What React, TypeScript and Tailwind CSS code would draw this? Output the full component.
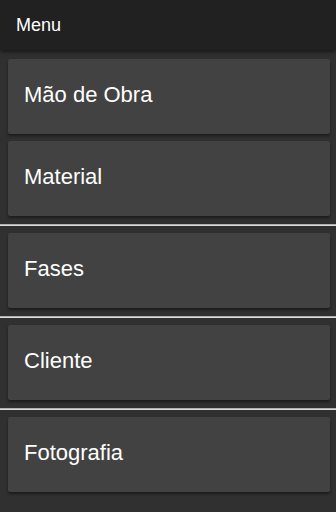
const items = ["Mão de Obra", "Material", "Fases", "Cliente", "Fotografia"];

// separators sit before these entries
const dividerBefore = new Set(["Fases", "Cliente", "Fotografia"]);

function MenuCard({ label }: { label: string }) {
  return (
    <button className="ml-2 mr-[6px] flex h-[75px] items-center rounded-[2px] bg-[#424242] px-4 pb-1 text-left text-[22px] text-white shadow-[0_2px_3px_rgba(0,0,0,0.45)]">
      {label}
    </button>
  );
}

export default function App() {
  return (
    <div
      className="min-h-[512px] w-[336px] bg-[#303030]"
      style={{ fontFamily: '"Liberation Sans", Arial, sans-serif' }}
    >
      <header className="relative z-10 flex h-[50px] items-center bg-[#212121] px-4 text-[18px] text-white shadow-[0_2px_4px_rgba(0,0,0,0.5)]">
        Menu
      </header>

      <nav className="flex flex-col gap-[7px] pt-[9px]">
        {items.map((item) => (
          <div key={item} className="flex flex-col gap-[7px]">
            {dividerBefore.has(item) && (
              <div className="mt-px h-[2px] border-t border-[#b0b0b0] bg-[#dcdcdc]" />
            )}
            <MenuCard label={item} />
          </div>
        ))}
      </nav>
    </div>
  );
}
